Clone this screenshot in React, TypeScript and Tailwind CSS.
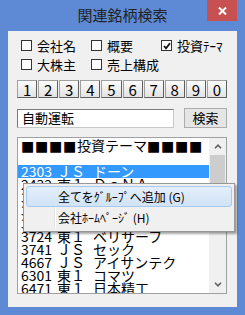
import React from "react";

const jp = { fontFamily: '"Noto Sans CJK JP", "Noto Sans", sans-serif' };

function CheckBox({ label, checked }: { label: string; checked?: boolean }) {
  return (
    <div className="flex items-center gap-[5px]">
      <div className="w-[11px] h-[11px] border border-[#333333] bg-white flex items-center justify-center">
        {checked && (
          <svg width="8" height="8" viewBox="0 0 8 8">
            <path d="M1 4 L3 6.3 L7 1.2" stroke="#111" strokeWidth="1.8" fill="none" />
          </svg>
        )}
      </div>
      <span className="text-[13px] leading-none text-black whitespace-nowrap">{label}</span>
    </div>
  );
}

const rows = [
  { code: "2432", mkt: "東１", name: "ＤｅＮＡ" },
  { code: "3626", mkt: "東１", name: "ＴＩＳ" },
  { code: "3655", mkt: "東Ｍ", name: "ブレインパッド" },
  { code: "3697", mkt: "東１", name: "ＳＨＩＦＴ" },
  { code: "3724", mkt: "東１", name: "ベリサーフ" },
  { code: "3741", mkt: "ＪＳ", name: "セック" },
  { code: "4667", mkt: "ＪＳ", name: "アイサンテク" },
  { code: "6301", mkt: "東１", name: "コマツ" },
  { code: "6471", mkt: "東１", name: "日本精工" },
];

function Row({ code, mkt, name, selected }: { code: string; mkt: string; name: string; selected?: boolean }) {
  return (
    <div
      className={`flex h-[13px] items-center pl-[3px] text-[14px] leading-[13px] whitespace-nowrap ${
        selected ? "bg-[#3399ff] text-white" : "text-black"
      }`}
    >
      <span className="w-[36px]">{code}</span>
      <span className="w-[36px]">{mkt}</span>
      <span>{name}</span>
    </div>
  );
}

function Squares() {
  return (
    <>
      {[0, 1, 2, 3].map((i) => (
        <span key={i} className="inline-block w-[14px] font-['DejaVu_Sans'] text-[14px]">
          ■
        </span>
      ))}
    </>
  );
}

export default function App() {
  return (
    <div className="relative w-[245px] h-[315px] bg-[#5e8ad5] flex flex-col overflow-hidden" style={jp}>
      <div className="grid grid-cols-[38px_1fr_38px] h-[31px]">
        <div />
        <div className="flex items-center justify-center text-[15px] text-[#222]">関連銘柄検索</div>
        <div className="flex justify-start">
          <div className="w-[30px] h-[21px] bg-[#c75050] flex items-center justify-center">
            <svg width="9" height="8" viewBox="0 0 9 8">
              <path d="M1 0.5 L8 7.5 M8 0.5 L1 7.5" stroke="white" strokeWidth="2" />
            </svg>
          </div>
        </div>
      </div>

      <div className="mx-[8px] h-[276px] bg-[#f0f0f0] flex flex-col pt-[5px]">
        <div className="grid grid-cols-[70px_70px_70px] pl-[13px] h-[19px] items-center">
          <CheckBox label="会社名" />
          <CheckBox label="概要" />
          <CheckBox label="投資ﾃｰﾏ" checked />
        </div>
        <div className="grid grid-cols-[70px_70px_70px] pl-[13px] h-[19px] items-center">
          <CheckBox label="大株主" />
          <CheckBox label="売上構成" />
        </div>

        <div className="grid grid-cols-10 gap-[1px] w-[210px] ml-[9px] mt-[6px]">
          {["1", "2", "3", "4", "5", "6", "7", "8", "9", "0"].map((n) => (
            <div
              key={n}
              className="h-[18px] flex items-center justify-center text-[15px] leading-none text-black bg-gradient-to-b from-[#fbfbfb] to-[#e3e3e3] border border-[#a0a0a0] border-r-[#5f5f5f] border-b-[#5f5f5f]"
            >
              {n}
            </div>
          ))}
        </div>

        <div className="flex items-center ml-[9px] mt-[10px] h-[20px] gap-[10px]">
          <div className="w-[157px] h-[19px] bg-white border border-[#7a7a7a] border-r-[#c8c8c8] border-b-[#c8c8c8] flex items-center pl-[4px] text-[13px] text-black">
            自動運転
          </div>
          <div className="w-[43px] h-[20px] bg-[#e5e5e5] border border-[#acacac] flex items-center justify-center text-[13px] text-black">
            検索
          </div>
        </div>

        <div className="ml-[9px] mt-[9px] w-[210px] h-[157px] bg-white border border-[#a0a0a0] flex">
          <div className="flex-1 pt-[1px] overflow-hidden">
            <div className="h-[13px] pl-[3px] text-[14px] leading-[13px] text-black whitespace-nowrap">
              <Squares />
              <span>投資テーマ</span>
              <Squares />
            </div>
            <div className="h-[13px]" />
            <Row code="2303" mkt="ＪＳ" name="ドーン" selected />
            {rows.map((r) => (
              <Row key={r.code} {...r} />
            ))}
          </div>
          <div className="w-[17px] bg-[#f0f0f0] flex flex-col">
            <div className="h-[17px] flex items-center justify-center">
              <svg width="8" height="5" viewBox="0 0 8 5">
                <path d="M1 4.2 L4 1.2 L7 4.2" stroke="#606060" strokeWidth="1.6" fill="none" />
              </svg>
            </div>
            <div className="mx-[1px] h-[45px] bg-[#cdcdcd]" />
            <div className="flex-1" />
            <div className="h-[17px] flex items-center justify-center">
              <svg width="8" height="5" viewBox="0 0 8 5">
                <path d="M1 0.8 L4 3.8 L7 0.8" stroke="#606060" strokeWidth="1.6" fill="none" />
              </svg>
            </div>
          </div>
        </div>
      </div>

      <div className="absolute left-[23px] top-[183px] w-[212px] h-[49px] bg-[#f0f0f0] border border-[#979797] shadow-[2px_2px_2px_rgba(0,0,0,0.35)] p-[2px] flex flex-col">
        <div className="absolute left-[30px] top-[2px] bottom-[2px] w-[2px] border-l border-[#e2e3e3] bg-white" />
        <div className="relative h-[21px] rounded-[3px] border border-[#a6c9ef] bg-gradient-to-b from-[#e3eefa] to-[#d1e3f6] flex items-center pl-[31px] text-[12px] text-black whitespace-nowrap">
          全てをｸﾞﾙｰﾌﾟへ追加 (G)
        </div>
        <div className="relative h-[22px] flex items-center pl-[32px] text-[12px] text-black whitespace-nowrap">
          会社ﾎｰﾑﾍﾟｰｼﾞ (H)
        </div>
      </div>
    </div>
  );
}
